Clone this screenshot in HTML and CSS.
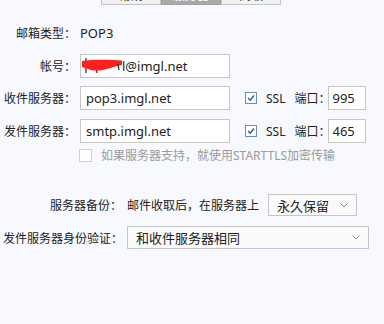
FILE: index.html
```html
<!DOCTYPE html>
<html lang="zh-CN">

<head>
    <meta charset="UTF-8">
    <title>账户设置</title>
    <link rel="stylesheet" href="styles.css">
</head>

<body>
    <div class="tabs">
        <div class="tab">常规</div>
        <div class="tab active">服务器</div>
        <div class="tab">高级</div>
    </div>

    <div class="form">
        <div class="row row-type">
            <div class="label">邮箱类型：</div>
            <div class="value">POP3</div>
        </div>

        <div class="row row-account">
            <div class="label">帐号：</div>
            <div class="field">
                <input class="input account" type="text" value="l@imgl.net" readonly>
                <svg class="redact" width="42" height="16" viewBox="0 0 42 16">
                    <path d="M4 0 L4 15 M14 9 L15 15" stroke="#222" stroke-width="1.2" fill="none" />
                    <path d="M0 3 C10 1.5, 28 1.5, 40 2.5 L40 7 C32 8, 26 12, 16 12.5 C9 13, 4 10, 0 9 Z" fill="#ff1f1f" />
                    <path d="M36 6 L37 12" stroke="#222" stroke-width="1.2" fill="none" />
                </svg>
            </div>
        </div>

        <div class="row row-server">
            <div class="label">收件服务器：</div>
            <input class="input" type="text" value="pop3.imgl.net" readonly>
            <span class="check on">
                <svg width="10" height="10" viewBox="0 0 10 10"><path d="M2 5 L4.2 7.2 L8 2.5" stroke="#2a5d9c" stroke-width="1.4" fill="none" /></svg>
            </span>
            <span class="ssl">SSL</span>
            <span class="port-label">端口：</span>
            <input class="input port" type="text" value="995" readonly>
        </div>

        <div class="row row-server">
            <div class="label">发件服务器：</div>
            <input class="input" type="text" value="smtp.imgl.net" readonly>
            <span class="check on">
                <svg width="10" height="10" viewBox="0 0 10 10"><path d="M2 5 L4.2 7.2 L8 2.5" stroke="#2a5d9c" stroke-width="1.4" fill="none" /></svg>
            </span>
            <span class="ssl">SSL</span>
            <span class="port-label">端口：</span>
            <input class="input port" type="text" value="465" readonly>
        </div>

        <div class="row row-tls">
            <span class="check off"></span>
            <span class="tls-text">如果服务器支持，就使用STARTTLS加密传输</span>
        </div>

        <div class="row row-backup">
            <div class="label-wide">服务器备份：</div>
            <span class="hint">邮件收取后，在服务器上</span>
            <div class="select short">
                <span>永久保留</span>
                <svg width="8" height="5" viewBox="0 0 8 5"><path d="M0.5 0.5 L4 4 L7.5 0.5" stroke="#888" stroke-width="1" fill="none" /></svg>
            </div>
        </div>

        <div class="row row-auth">
            <div class="label-wide">发件服务器身份验证：</div>
            <div class="select long">
                <span>和收件服务器相同</span>
                <svg width="8" height="5" viewBox="0 0 8 5"><path d="M0.5 0.5 L4 4 L7.5 0.5" stroke="#888" stroke-width="1" fill="none" /></svg>
            </div>
        </div>
    </div>
</body>

</html>
```

FILE: styles.css
```css
* {
    margin: 0;
    padding: 0;
    box-sizing: border-box;
}

body {
    font-family: "Noto Sans", "Noto Sans CJK SC", sans-serif;
    font-size: 12px;
    background: #f7f9fe;
    color: #222;
    width: 384px;
    height: 324px;
    overflow: hidden;
}

/* tab strip, mostly scrolled off the top */
.tabs {
    display: flex;
    margin-left: 101px;
    margin-top: -14px;
    width: 180px;
    height: 19px;
}

.tab {
    flex: 1;
    background: #f2f2f2;
    border: 1px solid #c4c4c4;
    text-align: center;
    font-size: 12px;
    line-height: 17px;
    color: #333;
}

.tab.active {
    background: #a9a9a9;
    border-color: #a0a0a0;
    color: #fff;
}

.form {
    padding-top: 16px;
}

.row {
    display: flex;
    align-items: center;
    height: 24px;
}

.label {
    width: 76px;
    text-align: right;
    margin-right: 4px;
    white-space: nowrap;
}

.value {
    font-size: 13px;
}

.row-account {
    margin-top: 9px;
}

.row-server {
    margin-top: 8px;
}

.row-server+.row-server {
    margin-top: 9px;
}

.field {
    position: relative;
}

.input {
    width: 150px;
    height: 24px;
    border: 1px solid #c6c6c6;
    background: #fff;
    padding: 0 5px;
    font-family: "Noto Sans", "Noto Sans CJK SC", sans-serif;
    font-size: 13px;
    color: #222;
    outline: none;
}

.input.account {
    padding-left: 41px;
}

.redact {
    position: absolute;
    left: 2px;
    top: 4px;
}

.check {
    display: inline-flex;
    align-items: center;
    justify-content: center;
    width: 12px;
    height: 12px;
    background: #fff;
}

.check.on {
    border: 1px solid #6f8db3;
    margin-left: 15px;
}

.check.off {
    border: 1px solid #cfcfcf;
    width: 13px;
    height: 13px;
    margin-left: 79px;
}

.ssl {
    margin-left: 9px;
    font-size: 12px;
}

.port-label {
    margin-left: 9px;
}

.input.port {
    width: 38px;
    padding: 0 3px;
    margin-left: -2px;
}

.row-tls {
    margin-top: 4px;
    height: 16px;
}

.tls-text {
    margin-left: 9px;
    color: #9a9a9a;
}

.label-wide {
    width: 124px;
    flex-shrink: 0;
    text-align: right;
    margin-right: 3px;
    white-space: nowrap;
}

.row-backup {
    margin-top: 31px;
    height: 22px;
}

.row-backup .label-wide {
    padding-right: 2px;
}

.hint {
    margin-right: 9px;
}

.select {
    display: flex;
    align-items: center;
    justify-content: space-between;
    height: 22px;
    border: 1px solid #c6c6c6;
    background: #fafafa;
    padding: 0 8px;
    font-size: 13px;
}

.select.short {
    width: 89px;
}

.select.long {
    width: 242px;
    height: 23px;
}

.row-auth {
    margin-top: 10px;
    height: 23px;
}

.row-auth .label-wide {
    text-align: left;
    padding-left: 3px;
}
```
